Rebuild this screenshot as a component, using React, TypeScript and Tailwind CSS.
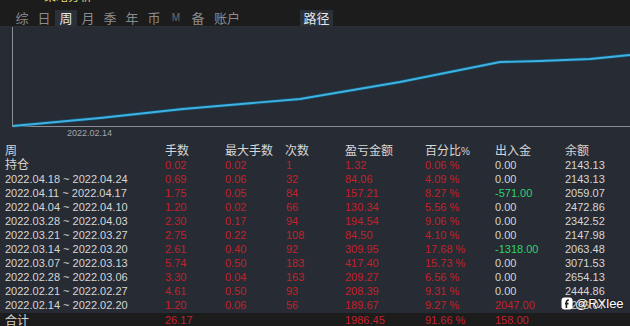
import React from "react";

const font = { fontFamily: '"Liberation Sans", "Noto Sans CJK SC", sans-serif' };

const tabs = [
  { label: "综", w: "w-[22px]" },
  { label: "日", w: "w-[22px]" },
  { label: "周", w: "w-[22px]", active: true },
  { label: "月", w: "w-[22px]" },
  { label: "季", w: "w-[22px]" },
  { label: "年", w: "w-[22px]" },
  { label: "币", w: "w-[22px]" },
  { label: "M", w: "w-[22px]", small: true },
  { label: "备", w: "w-[22px]" },
  { label: "账户", w: "w-[36px]" },
];

type Row = {
  name: string;
  lots: string;
  maxLots: string;
  count: string;
  pnl: string;
  pct: string;
  flow: string;
  flowColor?: "green" | "red";
  balance: string;
};

const rows: Row[] = [
  { name: "持仓", lots: "0.02", maxLots: "0.02", count: "1", pnl: "1.32", pct: "0.06 %", flow: "0.00", balance: "2143.13" },
  { name: "2022.04.18 ~ 2022.04.24", lots: "0.69", maxLots: "0.06", count: "32", pnl: "84.06", pct: "4.09 %", flow: "0.00", balance: "2143.13" },
  { name: "2022.04.11 ~ 2022.04.17", lots: "1.75", maxLots: "0.05", count: "84", pnl: "157.21", pct: "8.27 %", flow: "-571.00", flowColor: "green", balance: "2059.07" },
  { name: "2022.04.04 ~ 2022.04.10", lots: "1.20", maxLots: "0.02", count: "66", pnl: "130.34", pct: "5.56 %", flow: "0.00", balance: "2472.86" },
  { name: "2022.03.28 ~ 2022.04.03", lots: "2.30", maxLots: "0.17", count: "94", pnl: "194.54", pct: "9.06 %", flow: "0.00", balance: "2342.52" },
  { name: "2022.03.21 ~ 2022.03.27", lots: "2.75", maxLots: "0.22", count: "108", pnl: "84.50", pct: "4.10 %", flow: "0.00", balance: "2147.98" },
  { name: "2022.03.14 ~ 2022.03.20", lots: "2.61", maxLots: "0.40", count: "92", pnl: "309.95", pct: "17.68 %", flow: "-1318.00", flowColor: "green", balance: "2063.48" },
  { name: "2022.03.07 ~ 2022.03.13", lots: "5.74", maxLots: "0.50", count: "183", pnl: "417.40", pct: "15.73 %", flow: "0.00", balance: "3071.53" },
  { name: "2022.02.28 ~ 2022.03.06", lots: "3.30", maxLots: "0.04", count: "163", pnl: "209.27", pct: "6.56 %", flow: "0.00", balance: "2654.13" },
  { name: "2022.02.21 ~ 2022.02.27", lots: "4.61", maxLots: "0.50", count: "93", pnl: "208.39", pct: "9.31 %", flow: "0.00", balance: "2444.86" },
  { name: "2022.02.14 ~ 2022.02.20", lots: "1.20", maxLots: "0.06", count: "56", pnl: "189.67", pct: "9.27 %", flow: "2047.00", flowColor: "red", balance: "2236.07" },
];

const grid = "grid grid-cols-[160px_60px_60px_60px_80px_70px_70px_1fr] pl-[5px] h-[14px] items-center";
const red = "text-[#c2222b]";
const white = "text-[#d6d6d6]";

function Chart() {
  const pts = "13,99 100,91 183,82 300,72 400,55 450,45 500,35 540,34 590,32 630,28";
  return (
    <div className="flex flex-col h-[117px]">
      <svg width="630" height="101" className="block">
        <line x1="12.5" y1="0" x2="12.5" y2="100" stroke="#8a8d93" strokeWidth="1" />
        <line x1="12" y1="99.5" x2="630" y2="99.5" stroke="#8a8d93" strokeWidth="1" />
        <polyline points={pts} fill="none" stroke="#174e68" strokeWidth="3.5" strokeLinejoin="round" />
        <polyline points={pts} fill="none" stroke="#3db2e3" strokeWidth="1.8" strokeLinejoin="round" />
      </svg>
      <div className="pl-[67px] text-[9px] leading-[10px] text-[#a3a6ab]">2022.02.14</div>
    </div>
  );
}

export default function App() {
  return (
    <div className="relative w-[630px] h-[326px] overflow-hidden bg-[#272b33]" style={font}>
      <div className="h-[27px] bg-[#1c1c1d] border-b border-[#2c2f34] flex flex-col">
        <div className="h-[4px] overflow-hidden pl-[44px]">
          <div className="text-[12px] leading-[12px] -mt-[9px] text-[#e8d870]">策略分析</div>
        </div>
        <div className="flex items-center h-[16px] mt-[6px] pl-[11px]">
          {tabs.map((t) => (
            <div
              key={t.label}
              className={`${t.w} h-[16px] flex items-center justify-center ${
                t.active ? "bg-[#2b3039] text-[#e4e6ea]" : t.small ? "text-[#6e6f72]" : "text-[#8a8b8e]"
              } ${t.small ? "text-[10px]" : "text-[13px]"} leading-none`}
            >
              {t.label}
            </div>
          ))}
          <div className="ml-[55px] w-[33px] h-[16px] flex items-center justify-center bg-[#2b3039] text-[#e4e6ea] text-[13px] leading-none">
            路径
          </div>
        </div>
      </div>
      <Chart />
      <div className="flex flex-col text-[11px] leading-none">
        <div className={`${grid} ${white} text-[12px]`}>
          <span>周</span>
          <span>手数</span>
          <span>最大手数</span>
          <span>次数</span>
          <span>盈亏金额</span>
          <span>
            百分比<span className="text-[10px]">%</span>
          </span>
          <span>出入金</span>
          <span>余额</span>
        </div>
        {rows.map((r) => (
          <div key={r.name} className={grid}>
            <span className={`${white} ${r.name === "持仓" ? "text-[12px]" : ""}`}>{r.name}</span>
            <span className={red}>{r.lots}</span>
            <span className={red}>{r.maxLots}</span>
            <span className={`${red} pl-[1px]`}>{r.count}</span>
            <span className={red}>{r.pnl}</span>
            <span className={red}>{r.pct}</span>
            <span
              className={
                r.flowColor === "green" ? "text-[#2fd36e]" : r.flowColor === "red" ? red : white
              }
            >
              {r.flow}
            </span>
            <span className={white}>{r.balance}</span>
          </div>
        ))}
        <div className={`${grid} bg-[#1c1c1d] h-[15px] mt-[1px]`}>
          <span className={`${white} text-[12px]`}>合计</span>
          <span className={red}>26.17</span>
          <span />
          <span />
          <span className={red}>1986.45</span>
          <span className={red}>91.66 %</span>
          <span className={red}>158.00</span>
          <span />
        </div>
      </div>
      <div className="absolute left-[561px] top-[297px] flex items-center gap-[2px] text-white text-[13px] leading-none [text-shadow:0_0_2px_rgba(0,0,0,0.8)]">
        <svg width="12" height="13" viewBox="0 0 12 13">
          <rect x="0.5" y="0.5" width="11" height="12" rx="3" fill="#ffffff" />
          <path d="M7.8 3.2 C6.3 3 5.4 3.8 5.4 5.2 V11 M4 6.6 H7.5" stroke="#222" strokeWidth="1.6" fill="none" />
        </svg>
        <span>@RXlee</span>
      </div>
    </div>
  );
}
